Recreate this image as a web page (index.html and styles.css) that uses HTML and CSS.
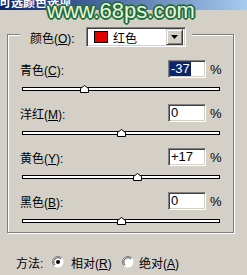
FILE: index.html
```html
<!DOCTYPE html>
<html>
<head>
<meta charset="utf-8">
<link rel="stylesheet" href="styles.css">
</head>
<body>
<div class="window">
  <div class="titlebar"><span class="title">可选颜色选项</span></div>
  <div class="watermark">www.68ps.com</div>
  <div class="dialog">
    <div class="group">
      <div class="legend">
        <span class="legend-label">颜色(<u>O</u>):</span>
        <div class="combo">
          <span class="swatch"></span>
          <span class="combo-text">红色</span>
          <span class="combo-btn"><svg width="7" height="4" viewBox="0 0 7 4"><polygon points="0,0 7,0 3.5,4" fill="#000"/></svg></span>
        </div>
      </div>
      <div class="sections">
        <div class="section">
          <div class="row">
            <span class="label">青色(<u>C</u>):</span>
            <div class="field"><span class="sel">-37</span></div>
            <span class="pct">%</span>
          </div>
          <div class="slider"><div class="track"></div><svg class="thumb" style="left:31.5%" width="9" height="8" viewBox="0 0 9 8"><polygon points="0.5,7.5 0.5,3.5 4.5,0.5 8.5,3.5 8.5,7.5" fill="#fff" stroke="#000"/></svg></div>
        </div>
        <div class="section">
          <div class="row">
            <span class="label">洋红(<u>M</u>):</span>
            <div class="field"><span class="val">0</span></div>
            <span class="pct">%</span>
          </div>
          <div class="slider"><div class="track"></div><svg class="thumb" style="left:50%" width="9" height="8" viewBox="0 0 9 8"><polygon points="0.5,7.5 0.5,3.5 4.5,0.5 8.5,3.5 8.5,7.5" fill="#fff" stroke="#000"/></svg></div>
        </div>
        <div class="section">
          <div class="row">
            <span class="label">黄色(<u>Y</u>):</span>
            <div class="field"><span class="val">+17</span></div>
            <span class="pct">%</span>
          </div>
          <div class="slider"><div class="track"></div><svg class="thumb" style="left:58.5%" width="9" height="8" viewBox="0 0 9 8"><polygon points="0.5,7.5 0.5,3.5 4.5,0.5 8.5,3.5 8.5,7.5" fill="#fff" stroke="#000"/></svg></div>
        </div>
        <div class="section">
          <div class="row">
            <span class="label">黑色(<u>B</u>):</span>
            <div class="field"><span class="val">0</span></div>
            <span class="pct">%</span>
          </div>
          <div class="slider"><div class="track"></div><svg class="thumb" style="left:50%" width="9" height="8" viewBox="0 0 9 8"><polygon points="0.5,7.5 0.5,3.5 4.5,0.5 8.5,3.5 8.5,7.5" fill="#fff" stroke="#000"/></svg></div>
        </div>
      </div>
    </div>
    <div class="method">
      <span class="m-label">方法:</span>
      <svg class="radio" width="12" height="12" viewBox="0 0 12 12">
        <circle cx="6" cy="6" r="5.5" fill="#fff"/>
        <path d="M10,2 A5.5,5.5 0 0 0 2,10" fill="none" stroke="#808080" stroke-width="1"/>
        <path d="M9,3 A4.2,4.2 0 0 0 3,9" fill="none" stroke="#404040" stroke-width="1"/>
        <circle cx="6" cy="6" r="2" fill="#000"/>
      </svg>
      <span class="r-text first">相对(<u>R</u>)</span>
      <svg class="radio" width="12" height="12" viewBox="0 0 12 12">
        <circle cx="6" cy="6" r="5.5" fill="#fff"/>
        <path d="M10,2 A5.5,5.5 0 0 0 2,10" fill="none" stroke="#808080" stroke-width="1"/>
        <path d="M9,3 A4.2,4.2 0 0 0 3,9" fill="none" stroke="#404040" stroke-width="1"/>
      </svg>
      <span class="r-text second">绝对(<u>A</u>)</span>
    </div>
  </div>
</div>
</body>
</html>
```

FILE: styles.css
```css
html, body {
  margin: 0;
  padding: 0;
}
body {
  background: #d4d0c8;
  font-family: "Liberation Sans", "Noto Sans CJK SC", sans-serif;
  font-size: 12px;
  color: #000;
}
.window {
  position: relative;
  width: 247px;
  height: 275px;
  overflow: hidden;
}
.titlebar {
  height: 10px;
  background: linear-gradient(to right, #0a246a, #a6caf0);
  overflow: hidden;
}
.title {
  display: block;
  color: #fff;
  font-weight: bold;
  font-size: 12px;
  line-height: 12px;
  margin-top: -4px;
  margin-left: -1px;
  font-family: "Noto Sans CJK SC", sans-serif;
}
.watermark {
  position: absolute;
  left: 47px;
  top: 0;
  font-family: "Liberation Sans", sans-serif;
  font-size: 22px;
  line-height: 22px;
  color: #e8f4e2;
  text-shadow:
    1px 0 #1f6a33, -1px 0 #1f6a33, 0 1px #1f6a33, 0 -1px #1f6a33,
    1px 1px #1f6a33, -1px -1px #1f6a33, 1px -1px #1f6a33, -1px 1px #1f6a33,
    2px 0 #2f7d40, -2px 0 #2f7d40, 0 2px #2f7d40, 0 -2px #2f7d40;
}
.dialog {
  padding: 24px 0 0 7px;
}
.group {
  width: 227px;
  height: 199px;
  box-sizing: border-box;
  border: 1px solid #808080;
  box-shadow: 1px 1px 0 #fff, inset 1px 1px 0 #fff;
}
.legend {
  display: flex;
  align-items: center;
  width: max-content;
  height: 20px;
  margin: -8px 0 0 12px;
  padding: 0 6px 0 10px;
  background: #d4d0c8;
}
.legend-label {
  width: 56px;
}
.combo {
  display: flex;
  align-items: center;
  width: 100px;
  height: 20px;
  box-sizing: border-box;
  background: #fff;
  border: 1px solid;
  border-color: #808080 #fff #fff #808080;
  box-shadow: inset 1px 1px 0 #404040, inset -1px -1px 0 #d4d0c8;
  padding: 2px;
}
.swatch {
  width: 14px;
  height: 12px;
  box-sizing: border-box;
  border: 1px solid #000;
  background: #e00000;
  margin-left: 5px;
}
.combo-text {
  margin-left: 5px;
  font-family: "Noto Sans CJK SC", sans-serif;
}
.combo-btn {
  margin-left: auto;
  width: 17px;
  height: 16px;
  box-sizing: border-box;
  display: flex;
  align-items: center;
  justify-content: center;
  background: #d4d0c8;
  border: 1px solid;
  border-color: #d4d0c8 #404040 #404040 #d4d0c8;
  box-shadow: inset 1px 1px 0 #fff, inset -1px -1px 0 #808080;
}
.sections {
  display: flex;
  flex-direction: column;
  gap: 9px;
  margin-top: 13px;
}
.row {
  display: grid;
  grid-template-columns: 160px 38px auto;
  align-items: center;
  height: 18px;
}
.label {
  padding-left: 12px;
}
.field {
  display: flex;
  align-items: stretch;
  height: 18px;
  box-sizing: border-box;
  background: #fff;
  border: 1px solid;
  border-color: #808080 #fff #fff #808080;
  box-shadow: inset 1px 1px 0 #404040, inset -1px -1px 0 #d4d0c8;
  padding: 1px 0 1px 1px;
  font-size: 13px;
}
.sel {
  background: #0a246a;
  color: #fff;
  line-height: 14px;
  padding: 0 1px;
}
.val {
  line-height: 14px;
  padding: 0 1px;
}
.pct {
  margin-left: 4px;
  font-size: 13px;
}
.slider {
  position: relative;
  width: 198px;
  height: 17px;
  box-sizing: border-box;
  padding-top: 9px;
  margin-left: 14px;
}
.track {
  height: 4px;
  box-sizing: border-box;
  border: 1px solid #000;
  background: #fff;
}
.thumb {
  position: absolute;
  top: 7px;
  margin-left: -4.5px;
  display: block;
}
.method {
  display: flex;
  align-items: center;
  height: 14px;
  margin-top: 22px;
  padding-left: 9px;
}
.m-label {
  width: 36px;
}
.radio {
  display: block;
  flex: none;
}
.r-text.first {
  margin-left: 7px;
  width: 51px;
}
.r-text.second {
  margin-left: 5px;
}
```
